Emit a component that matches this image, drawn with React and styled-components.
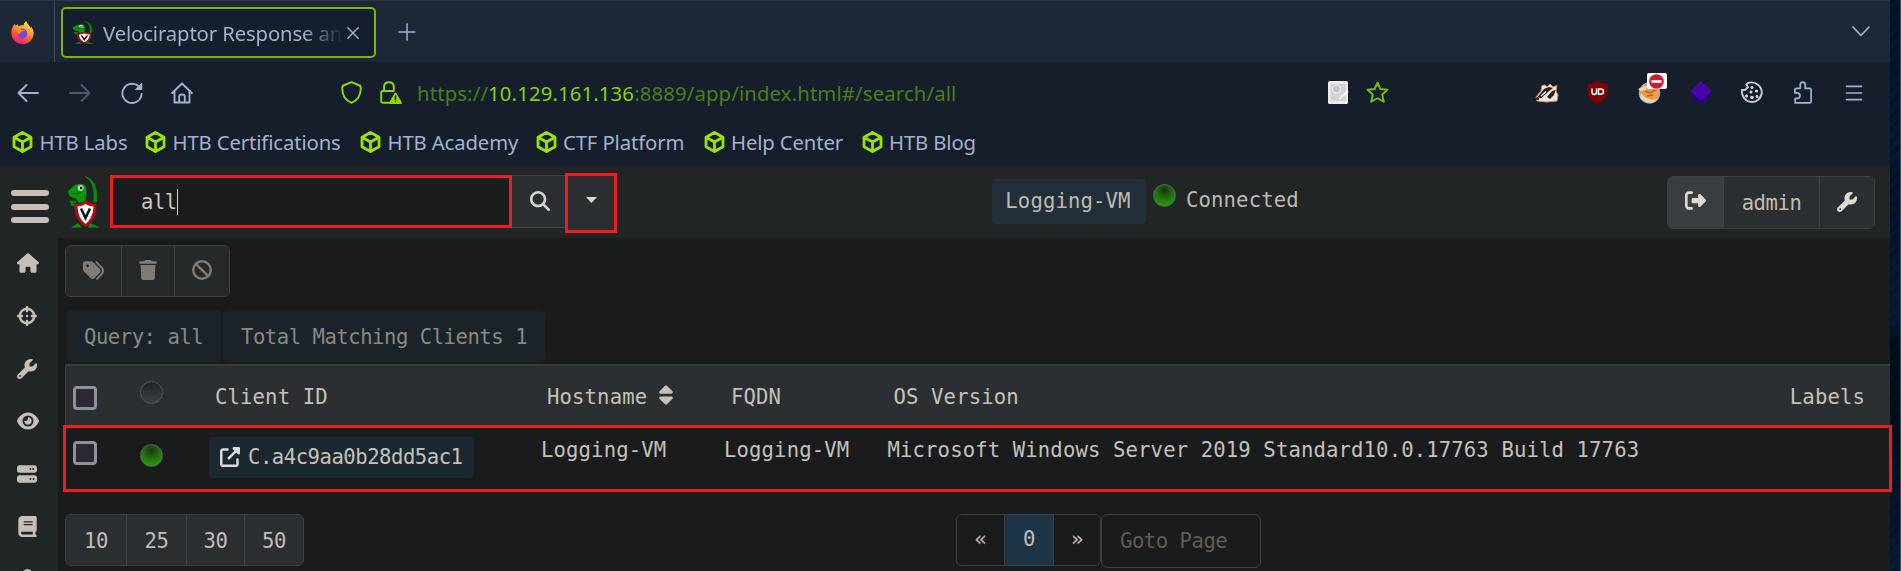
import React from "react";
import styled, { createGlobalStyle, css } from "styled-components";
import {
  FaHouse, FaCrosshairs, FaWrench, FaEye, FaServer, FaBook, FaUser, FaTags, FaTrash, FaBan,
  FaMagnifyingGlass, FaRightFromBracket, FaSort, FaUpRightFromSquare,
} from "react-icons/fa6";

const Global = createGlobalStyle`
  *, *::before, *::after { box-sizing: border-box; }
  body { margin: 0; background: #1a1b1c; overflow: hidden; }
  svg { display: block; flex: none; }
`;

const mono = css`
  font-family: "DejaVu Sans Mono", "Liberation Mono", monospace;
  font-size: 20.6px;
  line-height: 26px;
  letter-spacing: 0.13px;
  white-space: pre;
`;
const tightMono = css`
  ${mono}
  letter-spacing: -0.48px;
`;
const ui = css`
  font-family: "Noto Sans", sans-serif;
  font-size: 20.3px;
  white-space: pre;
`;

const Desktop = styled.div`
  width: 1901px;
  height: 571px;
  display: flex;
  overflow: hidden;
  position: relative;
`;
const Wallpaper = styled.div`
  width: 11px;
  border-right: 1px solid #3d4a5a;
  background:
    repeating-linear-gradient(135deg, rgba(0, 0, 0, 0.16) 0 4px, transparent 4px 9px),
    linear-gradient(#04152e, #061833 28%, #04142b 30%, #071b36 56%, #030f1c 60%, #030f1e 78%, #081b36);
`;
const Browser = styled.div`
  width: 1890px;
  height: 571px;
  display: flex;
  flex-direction: column;
`;

/* Browser chrome */
const TabStrip = styled.div`
  height: 62px;
  background: #1e2735;
  border-top: 1px solid #31343c;
  display: flex;
  align-items: center;
  color: #a4b1cd;
`;
const PinnedTab = styled.div`
  width: 55px;
  height: 61px;
  padding: 1px 0 0 11px;
  border-right: 1px solid #3e4757;
  display: flex;
  align-items: center;
`;
const Tab = styled.div`
  width: 315px;
  height: 51px;
  margin: 2px 22px 0 6px;
  padding: 0 14px 0 9px;
  border: 2px solid #7cb30f;
  border-radius: 5px;
  background: #151e2c;
  display: flex;
  align-items: center;
`;
const TabTitle = styled.div`
  ${ui}
  width: 241px;
  margin: 0 3px 0 9px;
  letter-spacing: -0.12px;
  overflow: hidden;
  mask-image: linear-gradient(90deg, #000 200px, transparent 241px);
`;
const ListTabs = styled.div`
  margin: 0 20px 0 auto;
`;
const NavBar = styled.div`
  height: 62px;
  padding-bottom: 1px;
  background: #161e2c;
  display: flex;
  align-items: center;
  color: #a4b1cd;
`;
const NavSlot = styled.div`
  flex: none;
  width: ${(p) => p.$w || 51.3}px;
  height: 61px;
  display: flex;
  align-items: center;
  justify-content: center;
  position: relative;
  opacity: ${(p) => (p.$dim ? 0.4 : 1)};
`;
const Extensions = styled.div`
  display: flex;
  margin-left: 119px;
`;
const UrlIcons = styled.div`
  display: flex;
  align-items: center;
  gap: 18px;
  margin: 0 15px 0 137px;
  color: #8fd60a;
`;
const Url = styled.div`
  ${ui}
  flex: none;
  width: 906px;
  letter-spacing: 0.15px;
  color: #4f7b1a;
  b { color: #8bcf10; font-weight: 400; }
`;
const Blocked = styled.div`
  position: absolute;
  left: 23px;
  top: 11px;
  width: 20px;
  height: 16px;
  background: #fff;
  border-radius: 2px;
  display: grid;
  place-items: center;
`;
const Bookmarks = styled.div`
  height: 42px;
  padding: 0 0 5px 12px;
  background: #161e2c;
  border-bottom: 1px solid #1b1e26;
  display: flex;
  align-items: center;
`;
const Bookmark = styled.div`
  ${ui}
  letter-spacing: -0.12px;
  width: ${(p) => p.$w}px;
  display: flex;
  align-items: center;
  gap: 6.5px;
  color: #a4b1cd;
`;

/* Application */
const AppHeader = styled.header`
  height: 72px;
  background: #212526;
  display: flex;
  padding-left: 11px;
`;
const Burger = styled.div`
  width: 38px;
  padding-top: 24px;
  display: flex;
  flex-direction: column;
  gap: 7.5px;
  i { height: 6px; border-radius: 3px; background: #c6bfb8; }
`;
const Logo = styled.div`
  margin: 10px 10px 0 18px;
`;
const SearchBox = styled.div`
  ${tightMono}
  width: 402px;
  height: 53px;
  margin-top: 9px;
  padding-left: 28px;
  background: #1b1c1d;
  border: 3px solid #ee1c23;
  display: flex;
  align-items: center;
  color: #ccc7bf;
  i { width: 1.5px; height: 26px; background: #d5d2cc; }
`;
const SearchButton = styled.div`
  width: 53px;
  height: 53px;
  margin-top: 9px;
  padding: 0 0 2px 3px;
  background: #2c2f32;
  border: solid #404548;
  border-width: 1px 0;
  color: #d8d4ce;
  display: grid;
  place-items: center;
`;
const DropdownButton = styled(SearchButton)`
  width: 52px;
  height: 60px;
  margin-top: 7px;
  padding: 0 0 6px;
  border: 3px solid #ee1c23;
`;
const HostBadge = styled.div`
  ${mono}
  width: 154px;
  height: 45px;
  margin: 13px 7px 0 375px;
  padding: 0 2px 2px 0;
  border-radius: 4px;
  background: #232f38;
  color: #bcb9b4;
  display: flex;
  align-items: center;
  justify-content: center;
`;
const Dot = styled.div`
  width: 23px;
  height: 23px;
  margin-top: ${(p) => p.$top || 0}px;
  border-radius: 50%;
  border: 1.5px solid ${(p) => (p.$on ? "#4e6450" : "#53575b")};
  background: ${(p) => p.$on
    ? "radial-gradient(circle at 50% 25%, #1c3214 0, #237011 45%, #2a9c0b 85%)"
    : "linear-gradient(#1f2324, #3c4043)"};
`;
const Status = styled.div`
  ${mono}
  width: 481px;
  margin: 21px 0 0 10px;
  color: #bcb9b4;
`;
const Group = styled.div`
  ${tightMono}
  height: ${(p) => p.$h || 53}px;
  display: flex;
  border: 1.5px solid #3c4144;
  border-radius: 6px;
  overflow: hidden;
`;
const GroupItem = styled.div`
  width: ${(p) => p.$w}px;
  background: ${(p) => p.$bg || "#2b2f31"};
  color: ${(p) => p.$c || "#c0bcb6"};
  display: flex;
  align-items: center;
  justify-content: center;
  padding-top: ${(p) => p.$drop || 0}px;
  padding-bottom: ${(p) => p.$lift || 0}px;
  & + & { border-left: 1.5px solid #3c4144; }
`;
const UserGroup = styled.div`
  margin-top: 10px;
`;
const Body = styled.div`
  flex: 1;
  display: flex;
  min-height: 0;
`;
const Sidebar = styled.nav`
  width: 58px;
  margin-top: -1px;
  background: #202526;
  color: #c6bfb8;
`;
const SideItem = styled.div`
  height: 52.7px;
  padding-left: 17px;
  display: flex;
  align-items: center;
`;
const Content = styled.main`
  width: 1832px;
  padding: 7px 0 0 7px;
  background: #1a1b1c;
`;
const Toolbar = styled.div`
  display: flex;
`;
const Queries = styled.div`
  display: flex;
  gap: 2px;
  margin: 13px 0 2px 2px;
`;
const QueryBadge = styled.div`
  ${tightMono}
  width: ${(p) => p.$w}px;
  height: 52px;
  padding-left: ${(p) => p.$pad || 17}px;
  line-height: 55px;
  background: #1b2329;
  border-radius: 5px;
  color: #8a8884;
`;
const Row = styled.div`
  ${mono}
  height: 62px;
  display: grid;
  grid-template-columns: 66.5px ${(p) => (p.$head ? "75.5px 332px 184px 162.5px" : "69.5px 332px 183px 163.5px")} 1fr 110px;
  padding-left: 7px;
  border-left: 1.5px solid #373c3e;
  border-top: ${(p) => (p.$head ? "2px solid #373c3e" : "0")};
  background: ${(p) => (p.$head ? "#2b2f31" : "#1a1b1c")};
  color: #c4c1bb;
`;
const Cell = styled.div`
  padding-top: ${(p) => p.$top}px;
  padding-right: ${(p) => p.$right || 0}px;
  display: flex;
  align-items: flex-start;
  justify-content: ${(p) => (p.$right ? "flex-end" : "flex-start")};
  gap: 8px;
`;
const Check = styled.div`
  width: 24px;
  height: 24px;
  border: 3px solid #8f8f9d;
  border-radius: 4px;
  background: #2b2a33;
`;
const ClientLink = styled.div`
  ${tightMono}
  width: 265px;
  height: 41px;
  border-radius: 4px;
  background: #1c2830;
  color: #c4c1bb;
  display: flex;
  align-items: center;
  padding: 0 0 2px 11px;
  gap: 8px;
  svg { color: #dedbd6; }
`;
const Pager = styled.div`
  display: flex;
  margin-top: 26px;
`;
const Pages = styled.div`
  margin-left: 652px;
`;
const Goto = styled.div`
  ${tightMono}
  width: 160px;
  height: 54px;
  padding: 13px 0 0 18px;
  border: 1.5px solid #3c4144;
  border-radius: 6px;
  color: #5d5b57;
`;
const RowHighlight = styled.div`
  position: absolute;
  left: 63px;
  top: 425px;
  width: 1829px;
  height: 67px;
  border: 3px solid #ee1c23;
`;

const Line = ({ w = 22, h = w, box = "0 0 22 22", sw = 1.9, children }) => (
  <svg width={w} height={h} viewBox={box} fill="none" stroke="currentColor" strokeWidth={sw} strokeLinecap="round" strokeLinejoin="round">
    {children}
  </svg>
);

const Firefox = () => (
  <svg width="23" height="23" viewBox="0 0 24 24">
    <defs>
      <linearGradient id="fx" x1="0.8" y1="0" x2="0.3" y2="1">
        <stop offset="0" stopColor="#fff24a" /><stop offset="0.4" stopColor="#ffa32a" />
        <stop offset="0.7" stopColor="#ff5040" /><stop offset="1" stopColor="#e8177f" />
      </linearGradient>
    </defs>
    <path fill="url(#fx)" d="M2.2 5.5 L3.7 3.2 L5 5 L7 3.4 L8 5.4 C10 4 12 4.2 13.2 4.8 C13 3 14.5 1 16 0 C16.5 3 20 5 20.3 7.2 L21 6 C23 8.5 24 11 23.5 14 C22.5 20.5 17.5 24 12 24 C5.5 24 0 19 .4 12 C.5 9 1.2 7 2.2 5.5Z" />
    <circle cx="11.8" cy="13" r="5.2" fill="#8b3fd0" />
    <path fill="#ff8a25" d="M5 8 C8 6.8 10 8 11.5 9.6 L15 10 C13 12.5 10 11.6 8.6 14 C6.5 13 5.2 10.5 5 8Z" />
    <circle cx="12.5" cy="13.8" r="3" fill="#6053e0" />
  </svg>
);

const Raptor = ({ w, h }) => (
  <svg width={w} height={h} viewBox="0 0 33 52" preserveAspectRatio="none">
    <path d="M18 .5 C27 3 31 12 29.5 26 L26.5 26 C28 14 26 5 18 .5Z" fill="#079007" stroke="#079007" strokeWidth=".6" />
    <path d="M1 15 C4 13 7 8 12 8 C18 7 20 12 19.5 16 C19.5 20 18 22 19 25 L12 27 L9 22.5 C4 22 1 19 1 15Z" fill="#07970a" />
    <path d="M5 17.5 Q10 18.5 14 16.5" fill="none" stroke="#075c07" strokeWidth="1.1" />
    <circle cx="13.7" cy="12" r="2.8" fill="#fff" /><circle cx="14" cy="12" r="1.5" fill="#111" />
    <path d="M9 26 L4 25.5 L5 29 L8 28.5" fill="none" stroke="#079007" strokeWidth="1.8" />
    <path d="M11 47 L4 51.5 H15Z M23 47 L33 51.5 H21Z" fill="#079007" />
    <path d="M7.5 28 Q13.5 28 18.5 24.5 Q23.5 28 29.5 28 Q30 44 18.5 51 Q7 44 7.5 28Z" fill="#b30d0d" />
    <path d="M10.5 30.5 Q14.5 30.5 18.5 28 Q22.5 30.5 26.5 30.5 Q26 42 18.5 48 Q11 42 10.5 30.5Z" fill="#fff" />
    <path d="M14 32.5 L18.5 42 L23 32.5" fill="none" stroke="#161616" strokeWidth="2.6" />
  </svg>
);

const Cube = () => (
  <svg width="21" height="22" viewBox="0 0 21 22" fill="none" stroke="#98e207" strokeWidth="2.8" strokeLinejoin="round">
    <path d="M10.5 1.5 L19 6.2 V15.8 L10.5 20.5 L2 15.8 V6.2Z M2.5 6.5 L10.5 11 L18.5 6.5 M10.5 11 V20" />
  </svg>
);

const bookmarks = [
  ["HTB Labs", 133], ["HTB Certifications", 215], ["HTB Academy", 175.5],
  ["CTF Platform", 168], ["Help Center", 158], ["HTB Blog", 140],
];
const sideIcons = [
  [FaHouse, 22], [FaCrosshairs, 20], [FaWrench, 20], [FaEye, 22], [FaServer, 20], [FaBook, 21], [FaUser, 21],
];

export default function App() {
  return (
    <Desktop>
      <Global />
      <Browser>
        <TabStrip>
          <PinnedTab><Firefox /></PinnedTab>
          <Tab>
            <Raptor w={22} h={23} />
            <TabTitle>Velociraptor Response and</TabTitle>
            <Line w={12} box="0 0 12 12" sw={1.4}><path d="M.8 .8 L11.2 11.2 M11.2 .8 L.8 11.2" /></Line>
          </Tab>
          <Line w={18} box="0 0 18 18" sw={1.5}><path d="M9 1 V17 M1 9 H17" /></Line>
          <ListTabs><Line w={18} h={11} box="0 0 18 11" sw={1.7}><path d="M1 1 L9 9.5 L17 1" /></Line></ListTabs>
        </TabStrip>
        <NavBar>
          <NavSlot $w={56}><Line><path d="M21 11 H1.5 M9.5 3 L1.5 11 L9.5 19" /></Line></NavSlot>
          <NavSlot $w={47} $dim><Line><path d="M1 11 H20.5 M12.5 3 L20.5 11 L12.5 19" /></Line></NavSlot>
          <NavSlot $w={57}><Line><path d="M19 6 A9.6 9.6 0 1 0 20.6 12" /><path d="M20.8 1.5 V7.5 H14.8Z" fill="currentColor" strokeWidth="1" /></Line></NavSlot>
          <NavSlot $w={44}><Line><path d="M1.2 11 L11 1.5 L20.8 11 M3.5 9.5 V20.5 H18.5 V9.5 M8.2 20 V14.5 Q8.2 12.5 11 12.5 Q13.8 12.5 13.8 14.5 V20" /></Line></NavSlot>
          <UrlIcons>
            <Line w={21} h={23} box="0 0 21 23"><path d="M10.5 1.2 L17.5 4 Q19.8 4.5 19.8 7 C19.8 14 16.5 19.5 10.5 21.8 C4.5 19.5 1.2 14 1.2 7 Q1.2 4.5 3.5 4Z" /></Line>
            <Line w={22} h={23} box="0 0 22 23">
              <path d="M9 21.8 H3 Q1.2 21.8 1.2 20 V12 Q1.2 10 3 10 H13.5 M4 10 V6 Q4 1.2 9 1.2 Q13.8 1.2 13.8 6 V10" />
              <path d="M15.5 12.5 L21 22 H10Z" fill="currentColor" />
              <path d="M15.5 15 V18.5 M15.5 20.5 V20.6" stroke="#161e2c" strokeWidth="1.5" />
            </Line>
          </UrlIcons>
          <Url>https://<b>10.129.161.136</b>:8889/app/index.html#/search/all</Url>
          <NavSlot $w={30}>
            <svg width="21" height="23" viewBox="0 0 21 23">
              <rect width="20" height="23" rx="1.5" fill="#ececec" /><rect x="2.5" y="3" width="15" height="17" fill="#d2d2d2" />
              <circle cx="8.5" cy="8" r="4" fill="#c4c4c4" stroke="#ededed" strokeWidth="1.2" />
              <path d="M11 18 L20 10" fill="none" stroke="#fafafa" strokeWidth="2" />
            </svg>
          </NavSlot>
          <NavSlot $w={49}>
            <Line w={23} h={23} box="0 0 23 23"><path stroke="#78bd09" d="M11.5 1.5 L14.3 8 L21.5 8.7 L16.2 13.5 L17.8 20.8 L11.5 17.2 L5.2 20.8 L6.8 13.5 L1.5 8.7 L8.7 8Z" /></Line>
          </NavSlot>
          <Extensions>
            <NavSlot>
              <svg width="24" height="20" viewBox="0 0 24 20">
                <path d="M1 14 L6 8 L7 2.5 L10 2 L12 4 L15 1 L18 4 L22 2.5 L21 8 L23 12 L22 18 L12 19 L2 18Z" fill="#f1e6dc" stroke="#d98a52" strokeWidth="1" />
                <path d="M2.5 14 L9 6 L14 4 L18 5 L13 9 L6 15.5Z M12 14 L17 8 L20.500 7 L19 12 L15 16Z" fill="#252222" />
                <path d="M6 13 L11 8.500" stroke="#fff" strokeWidth="1.3" /><circle cx="2.5" cy="15.5" r="1.6" fill="#222" />
              </svg>
            </NavSlot>
            <NavSlot>
              <svg width="21" height="25" viewBox="0 0 21 25">
                <path d="M10.5 1 Q15 4 20.5 4 V11 Q20.5 20 10.5 24 Q.5 20 .5 11 V4 Q6 4 10.5 1Z" fill="#800304" />
                <path d="M5 8.5 V12 Q5 14.5 7.3 14.5 Q9.5 14.5 9.5 12 V8.5 M11.5 9 V14.3 H13.5 Q16.5 14 16.5 11.5 Q16.5 9 13.5 9Z" fill="none" stroke="#fff" strokeWidth="1.5" />
              </svg>
            </NavSlot>
            <NavSlot>
              <svg width="23" height="24" viewBox="0 0 23 24">
                <circle cx="11.5" cy="12" r="10" fill="#f09a42" stroke="#b8aa9a" strokeWidth="1.5" />
                <path d="M0 8 L9 4 L8 9 L3 10Z M3 12 L2 17 L8 21 L14 22 L20 18 L14 19 L6 16Z" fill="#dedad2" />
                <path d="M7 10 L12 12 L17 9 M9 15 L15 14" stroke="#bf6420" strokeWidth="1.5" fill="none" />
              </svg>
              <Blocked><svg width="15" height="15" viewBox="0 0 15 15"><circle cx="7.5" cy="7.5" r="7.3" fill="#c81e38" /><path d="M2.5 7.5 H12.5" stroke="#fff" strokeWidth="2.6" /></svg></Blocked>
            </NavSlot>
            <NavSlot>
              <svg width="24" height="24" viewBox="0 0 24 26"><path d="M12 6 L23 16 L12 26 L1 16Z" fill="#25047c" /><path d="M12 0 L24 11 L12 21 L0 11Z" fill="#4605a8" /></svg>
            </NavSlot>
            <NavSlot>
              <svg width="23" height="24" viewBox="0 0 23 24" fill="none" stroke="#c9c9cb" strokeWidth="1.9">
                <path d="M8 2 C16 -.5 22 6 21.8 12 A10 10.5 0 1 1 2 9 L5 9 L8 6 L6.5 3.5Z" />
                <g fill="#d8d8da" stroke="none"><circle cx="12" cy="6.5" r="1.5" /><circle cx="16.5" cy="10" r="1.6" /><circle cx="11" cy="11" r="1.5" /><circle cx="6.5" cy="15" r="1.6" /><circle cx="12" cy="16.5" r="1.8" /><circle cx="17" cy="15.5" r="1.4" /></g>
              </svg>
            </NavSlot>
            <NavSlot>
              <Line w={20} h={23} box="0 0 20 25"><path d="M1.2 9 Q1.2 8 2.5 8 H7 V4 Q7 1.2 9.7 1.2 Q12.4 1.2 12.4 4 V8 H17.5 Q18.8 8 18.8 9.5 V22 Q18.8 23.8 17.5 23.8 H1.5 V19 H4 Q6.7 18.5 6.7 16 Q6.7 13.5 4 13 H1.2Z" /></Line>
            </NavSlot>
            <NavSlot><Line w={18} h={16} box="0 0 18 17" sw={1.7}><path d="M1 1.5 H17 M1 8.5 H17 M1 15.5 H17" /></Line></NavSlot>
          </Extensions>
        </NavBar>
        <Bookmarks>
          {bookmarks.map(([name, w]) => <Bookmark key={name} $w={w}><Cube />{name}</Bookmark>)}
        </Bookmarks>
        <AppHeader>
          <Burger><i /><i /><i /></Burger>
          <Logo><Raptor w={33} h={52} /></Logo>
          <SearchBox>all<i /></SearchBox>
          <SearchButton><FaMagnifyingGlass size={20} /></SearchButton>
          <DropdownButton><svg width="11" height="6" viewBox="0 0 11 6"><path d="M0 0 H11 L5.5 6Z" fill="#dcd9d3" /></svg></DropdownButton>
          <HostBadge>Logging-VM</HostBadge>
          <Dot $on $top={18} />
          <Status>Connected</Status>
          <UserGroup>
            <Group>
              <GroupItem $w={55} $bg="#3a3e41" $c="#dedbd5" $lift={4}><FaRightFromBracket size={21} /></GroupItem>
              <GroupItem $w={96}>admin</GroupItem>
              <GroupItem $w={55} $c="#dedbd5" $lift={2}><FaWrench size={20} /></GroupItem>
            </Group>
          </UserGroup>
        </AppHeader>
        <Body>
          <Sidebar>
            {sideIcons.map(([Icon, size], i) => <SideItem key={i}><Icon size={size} /></SideItem>)}
          </Sidebar>
          <Content>
            <Toolbar>
              <Group $h={52}>
                <GroupItem $w={55} $bg="#25292a" $c="#7f7b76" $lift={2}><FaTags size={21} /></GroupItem>
                <GroupItem $w={53} $bg="#25292a" $c="#7f7b76" $lift={2}><FaTrash size={20} /></GroupItem>
                <GroupItem $w={55} $bg="#25292a" $c="#7f7b76" $lift={2}><FaBan size={20} /></GroupItem>
              </Group>
            </Toolbar>
            <Queries>
              <QueryBadge $w={154}>Query: all</QueryBadge>
              <QueryBadge $w={322} $pad={18}>Total Matching Clients 1</QueryBadge>
            </Queries>
            <Row $head>
              <Cell $top={20}><Check /></Cell>
              <Cell $top={15}><Dot /></Cell>
              <Cell $top={18}>Client ID</Cell>
              <Cell $top={18}>Hostname<FaSort size={22} /></Cell>
              <Cell $top={18}>FQDN</Cell>
              <Cell $top={18}>OS Version</Cell>
              <Cell $top={18} $right={25}>Labels</Cell>
            </Row>
            <Row>
              <Cell $top={15}><Check /></Cell>
              <Cell $top={18}><Dot $on /></Cell>
              <Cell $top={11}><ClientLink><FaUpRightFromSquare size={20} />C.a4c9aa0b28dd5ac1</ClientLink></Cell>
              <Cell $top={11}>Logging-VM</Cell>
              <Cell $top={11}>Logging-VM</Cell>
              <Cell $top={11}>Microsoft Windows Server 2019 Standard10.0.17763 Build 17763</Cell>
              <Cell />
            </Row>
            <Pager>
              <Group $h={52}>
                {[["10", 60], ["25", 60], ["30", 58], ["50", 59]].map(([n, w]) => <GroupItem key={n} $w={w} $drop={2}>{n}</GroupItem>)}
              </Group>
              <Pages>
                <Group $h={52}>
                  <GroupItem $w={47} $bg="#1a1b1c" $lift={2}>«</GroupItem>
                  <GroupItem $w={49} $bg="#1d3447" $lift={2}>0</GroupItem>
                  <GroupItem $w={47} $bg="#1a1b1c" $lift={2}>»</GroupItem>
                </Group>
              </Pages>
              <Goto>Goto Page</Goto>
            </Pager>
          </Content>
        </Body>
      </Browser>
      <Wallpaper />
      <RowHighlight />
    </Desktop>
  );
}
